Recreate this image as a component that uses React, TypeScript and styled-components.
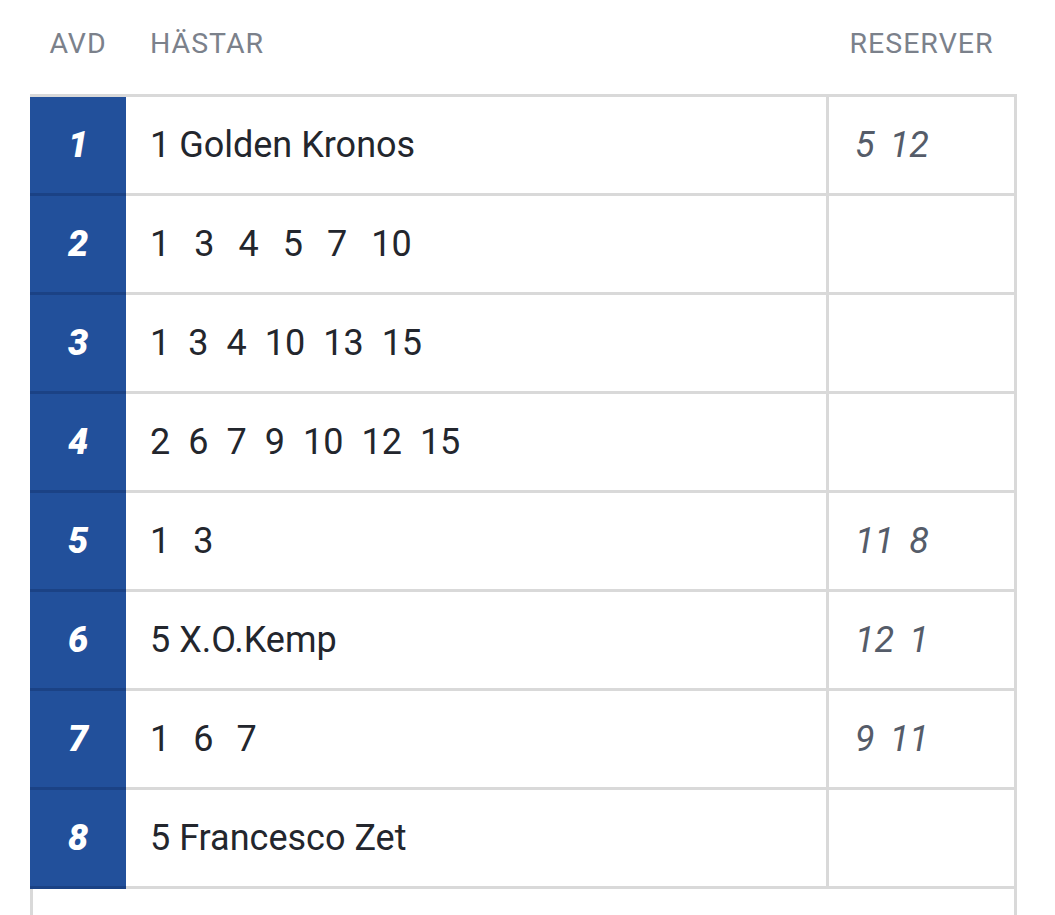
import React from "react";
import styled, { createGlobalStyle } from "styled-components";

const GlobalStyle = createGlobalStyle`
  html, body {
    margin: 0;
    padding: 0;
    background: #ffffff;
    font-family: Roboto, "Liberation Sans", Arial, sans-serif;
  }
`;

interface Leg {
  avd: number;
  horses: string[];
  reserves: number[];
  spread: number;
}

const legs: Leg[] = [
  { avd: 1, horses: ["1 Golden Kronos"], reserves: [5, 12], spread: 18 },
  { avd: 2, horses: ["1", "3", "4", "5", "7", "10"], reserves: [], spread: 24 },
  { avd: 3, horses: ["1", "3", "4", "10", "13", "15"], reserves: [], spread: 18 },
  { avd: 4, horses: ["2", "6", "7", "9", "10", "12", "15"], reserves: [], spread: 18 },
  { avd: 5, horses: ["1", "3"], reserves: [11, 8], spread: 23 },
  { avd: 6, horses: ["5 X.O.Kemp"], reserves: [12, 1], spread: 18 },
  { avd: 7, horses: ["1", "6", "7"], reserves: [9, 11], spread: 23 },
  { avd: 8, horses: ["5 Francesco Zet"], reserves: [], spread: 18 },
];

const Page = styled.div`
  padding: 0 38px 0 30px;
  width: 987px;
`;

const HeaderRow = styled.div`
  display: grid;
  grid-template-columns: 96px 1fr 191px;
  height: 94px;
  align-items: center;
  color: #7b818b;
  font-size: 28.5px;
  letter-spacing: 1px;
  text-transform: uppercase;
  padding-bottom: 8px;
  box-sizing: border-box;
`;

const HeaderCell = styled.div<{ $center?: boolean }>`
  text-align: ${(p) => (p.$center ? "center" : "left")};
  padding-left: ${(p) => (p.$center ? "0" : "24px")};
`;

const Table = styled.div`
  border-top: 3px solid #d9d9d9;
`;

const Row = styled.div`
  display: grid;
  grid-template-columns: 96px 1fr 191px;
  height: 99px;
`;

const AvdCell = styled.div`
  background: #22509b;
  border-bottom: 3px solid #1b4285;
  color: #ffffff;
  font-weight: 900;
  font-style: italic;
  font-size: 36px;
  display: flex;
  align-items: center;
  justify-content: center;
`;

const HorseCell = styled.div<{ $spread: number }>`
  border-bottom: 3px solid #d9d9d9;
  display: flex;
  align-items: center;
  gap: ${(p) => p.$spread}px;
  padding-left: 24px;
  font-size: 36px;
  color: #23262d;
`;

const ReserveCell = styled.div`
  border-bottom: 3px solid #d9d9d9;
  border-left: 3px solid #d9d9d9;
  border-right: 3px solid #d9d9d9;
  display: flex;
  align-items: center;
  gap: 15px;
  padding-left: 26px;
  font-size: 36px;
  font-style: italic;
  color: #555c69;
`;

const Tail = styled.div`
  height: 40px;
  border-left: 3px solid #d9d9d9;
  border-right: 3px solid #d9d9d9;
`;

export default function App() {
  return (
    <>
      <GlobalStyle />
      <Page>
        <HeaderRow>
          <HeaderCell $center>Avd</HeaderCell>
          <HeaderCell>Hästar</HeaderCell>
          <HeaderCell $center>Reserver</HeaderCell>
        </HeaderRow>
        <Table>
          {legs.map((leg) => (
            <Row key={leg.avd}>
              <AvdCell>{leg.avd}</AvdCell>
              <HorseCell $spread={leg.spread}>
                {leg.horses.map((h, i) => (
                  <span key={i}>{h}</span>
                ))}
              </HorseCell>
              <ReserveCell>
                {leg.reserves.map((r, i) => (
                  <span key={i}>{r}</span>
                ))}
              </ReserveCell>
            </Row>
          ))}
          <Tail />
        </Table>
      </Page>
    </>
  );
}
